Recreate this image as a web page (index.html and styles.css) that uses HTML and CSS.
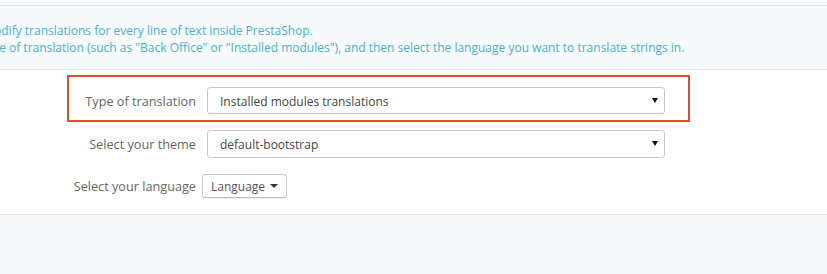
FILE: index.html
```html
<!DOCTYPE html>
<html lang="en">
<head>
    <meta charset="UTF-8">
    <title>Translations</title>
    <link rel="stylesheet" href="styles.css">
</head>
<body>
    <div class="alert-info">
        <div class="alert-text">
            <p>Here you can modify translations for every line of text inside PrestaShop.</p>
            <p>First, select a type of translation (such as "Back Office" or "Installed modules"), and then select the language you want to translate strings in.</p>
        </div>
    </div>

    <div class="form-panel">
        <div class="form-row highlight">
            <label>Type of translation</label>
            <div class="select">
                <span>Installed modules translations</span>
                <span class="arrow"></span>
            </div>
        </div>
        <div class="form-row">
            <label>Select your theme</label>
            <div class="select tall">
                <span>default-bootstrap</span>
                <span class="arrow"></span>
            </div>
        </div>
        <div class="form-row last">
            <label>Select your language</label>
            <button class="lang-btn">Language <span class="caret"></span></button>
        </div>
    </div>

    <div class="page-bottom"></div>
</body>
</html>
```

FILE: styles.css
```css
html, body {
    height: 100%;
}

body {
    margin: 0;
    font-family: 'Open Sans', 'Liberation Sans', sans-serif;
    font-size: 12px;
    line-height: 17px;
    color: #555;
    background-color: #f8f9fb;
    overflow: hidden;
}

.alert-info {
    margin-top: 5px;
    background-color: #f6fafc;
    border-top: 1px solid #d5e7ee;
    border-bottom: 1px solid #d5e7ee;
    padding: 16px 0 13px;
    overflow: hidden;
}

.alert-text {
    margin-left: -94px;
    color: #48b0cc;
    white-space: nowrap;
}

.alert-text p {
    margin: 0;
}

.form-panel {
    background-color: #fff;
    border-bottom: 1px solid #e5e6e8;
    padding-top: 5px;
}

.form-row {
    display: flex;
    align-items: center;
    width: 619px;
    margin-left: 67px;
    border: 2px solid transparent;
    padding: 6px 0;
}

.form-row.highlight {
    border-color: #d9502b;
    padding: 10px 0 6px;
}

.form-row.last {
    padding: 6px 0 14px;
}

.form-row label {
    width: 127px;
    text-align: right;
    margin-right: 11px;
    font-size: 12.7px;
    color: #666;
    padding-top: 1px;
}

.select {
    height: 24px;
    width: 438px;
    border: 1px solid #c9c9cc;
    border-radius: 3px;
    display: flex;
    align-items: center;
    justify-content: space-between;
    padding: 1px 6px 0 12px;
    box-sizing: content-box;
    color: #444;
    background: #fff;
}

.select.tall {
    height: 25px;
}

.arrow {
    width: 0;
    height: 0;
    border-top: 5px solid #111;
    border-left: 3.5px solid transparent;
    border-right: 3.5px solid transparent;
    margin-top: -2px;
}

.lang-btn {
    margin-left: -5px;
    height: 24px;
    padding: 0 8px;
    font-family: inherit;
    font-size: 12px;
    color: #555;
    background: #fff;
    border: 1px solid #cbcbcb;
    border-bottom-color: #bdbdbd;
    border-radius: 3px;
    box-shadow: 0 1px 1px rgba(0, 0, 0, 0.06);
    display: flex;
    align-items: center;
    gap: 5px;
}

.caret {
    width: 0;
    height: 0;
    border-top: 4px solid #333;
    border-left: 4px solid transparent;
    border-right: 4px solid transparent;
}
```
